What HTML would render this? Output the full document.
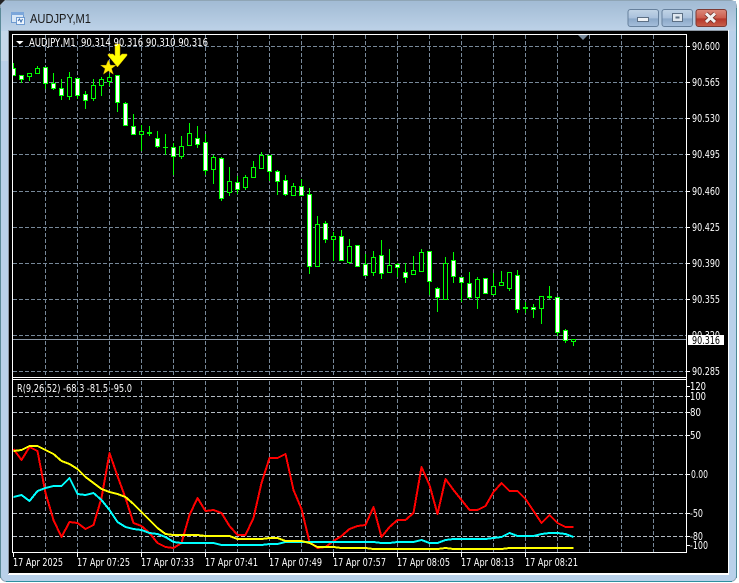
<!DOCTYPE html>
<html><head><meta charset="utf-8"><title>AUDJPY,M1</title>
<style>
html,body{margin:0;padding:0;background:#fff;width:739px;height:583px;overflow:hidden}
svg{display:block}
text{font-family:"DejaVu Sans","Liberation Sans",sans-serif;font-size:10.5px;fill:#fff}
.c{shape-rendering:crispEdges}
</style></head><body>
<svg width="739" height="583" viewBox="0 0 739 583" xmlns="http://www.w3.org/2000/svg">
<defs>
<linearGradient id="t" x1="0" y1="0" x2="0" y2="1"><stop offset="0" stop-color="#a3bcd5"/><stop offset=".05" stop-color="#a3bcd5"/><stop offset="1" stop-color="#bdd2e8"/></linearGradient>
<linearGradient id="b" x1="0" y1="0" x2="0" y2="1"><stop offset="0" stop-color="#c2d4e6"/><stop offset=".5" stop-color="#a9c1dc"/><stop offset=".55" stop-color="#8ba8c8"/><stop offset="1" stop-color="#a6bfdc"/></linearGradient>
<linearGradient id="r" x1="0" y1="0" x2="0" y2="1"><stop offset="0" stop-color="#dc8a7c"/><stop offset=".5" stop-color="#cc5d4e"/><stop offset=".55" stop-color="#b5362a"/><stop offset="1" stop-color="#c8604c"/></linearGradient>
<clipPath id="cl"><rect x="13" y="35" width="673" height="342"/></clipPath>
</defs>
<!-- window frame -->
<rect x="0.5" y="0.5" width="736" height="581" rx="6" fill="#b9d1ea" stroke="#8fa5b5"/>
<path d="M1 31V7a6 6 0 0 1 6-6H736V31z" fill="url(#t)"/>
<path d="M0 0h5L0 5z" fill="#222"/>
<rect x="1" y="31" width="7" height="30" fill="#cfdcea" opacity=".6"/>
<rect x="6" y="581" width="726" height="1" fill="#2f8f9f"/>
<rect x="736" y="8" width="1" height="570" fill="#4b8a98"/>
<rect x="0" y="8" width="1" height="570" fill="#5b8a98"/>
<rect x="8" y="30" width="721" height="545" fill="#fff"/>
<rect x="8" y="30" width="720" height="1" fill="#8d98a4"/>
<rect x="8" y="30" width="1" height="544" fill="#8d98a4"/>
<rect x="9" y="31" width="719" height="542" fill="#000"/>
<!-- titlebar icon -->
<g class="c">
<rect x="11.5" y="12.5" width="12" height="10" fill="#d7e6f6" stroke="#6f9bd0"/>
<rect x="11" y="12" width="13" height="3" fill="#7ba6da"/>
<rect x="16.5" y="17.5" width="8" height="7" fill="#eef5fd" stroke="#6f9bd0"/>
</g>
<path d="M18 21l1.5-2 1.5 3 1.5-3" fill="none" stroke="#3d6fb0"/>
<text x="30" y="23" style="font-family:'Liberation Sans',sans-serif;font-size:12.5px;fill:#1a1a1a" textLength="61" lengthAdjust="spacingAndGlyphs">AUDJPY,M1</text>
<!-- buttons -->
<g>
<rect x="628" y="9.5" width="30.5" height="17" rx="2.5" fill="url(#b)" stroke="#66809c"/>
<rect x="662" y="9.5" width="30.5" height="17" rx="2.5" fill="url(#b)" stroke="#66809c"/>
<rect x="696" y="9.5" width="30.5" height="17" rx="2.5" fill="url(#r)" stroke="#7d3a34"/>
<rect x="637.5" y="17.5" width="11" height="4" fill="#eef2f6" stroke="#5d7085" class="c"/>
<rect x="672.5" y="13.5" width="10" height="8" fill="#dfe7ef" stroke="#5d7085" class="c"/>
<rect x="675.5" y="16.5" width="4" height="2" fill="#5d7085" class="c"/>
<path d="M706 13.5l9 8.5M715 13.5l-9 8.5" stroke="#6b2a24" stroke-width="4.6"/>
<path d="M706 13.5l9 8.5M715 13.5l-9 8.5" stroke="#f2f2f2" stroke-width="3"/>
</g>
<!-- grid -->
<g class="c" fill="none" stroke="#778899" stroke-width="1" stroke-dasharray="4 2">
<path d="M45.5 35V377M77.5 35V377M109.5 35V377M141.5 35V377M173.5 35V377M205.5 35V377M237.5 35V377M269.5 35V377M301.5 35V377M333.5 35V377M365.5 35V377M397.5 35V377M429.5 35V377M461.5 35V377M493.5 35V377M525.5 35V377M557.5 35V377M589.5 35V377M621.5 35V377M653.5 35V377"/>
<path d="M13 46.5H686M13 82.5H686M13 118.5H686M13 154.5H686M13 191.5H686M13 227.5H686M13 263.5H686M13 299.5H686M13 335.5H686M13 371.5H686"/>
<path d="M45.5 381V552M77.5 381V552M109.5 381V552M141.5 381V552M173.5 381V552M205.5 381V552M237.5 381V552M269.5 381V552M301.5 381V552M333.5 381V552M365.5 381V552M397.5 381V552M429.5 381V552M461.5 381V552M493.5 381V552M525.5 381V552M557.5 381V552M589.5 381V552M621.5 381V552M653.5 381V552"/>
<path stroke="#b4bcc4" d="M13 396.5H686M13 412.5H686M13 435.5H686M13 474.5H686M13 513.5H686M13 536.5H686"/>
</g>
<!-- price line -->
<path class="c" d="M13 339.5H686" stroke="#8a98a8" stroke-width="1"/>
<!-- candles -->
<g clip-path="url(#cl)" stroke="#00ff00" stroke-width="1">
<path fill="none" d="M13.5 63V76M21.5 75V83M29.5 73V81M37.5 66V74M45.5 67V89M53.5 73V90M61.5 79V100M69.5 72V100M77.5 78V99M85.5 91V109M93.5 79V101M101.5 77V96M109.5 74V86M117.5 75V112M125.5 102V126M133.5 114V135M141.5 125V151M149.5 126V136M157.5 131V148M165.5 134V155M173.5 143V175M181.5 136V159M189.5 123V146M197.5 126V148M205.5 134V175M213.5 155V184M221.5 157V201M229.5 167V196M237.5 176V194M245.5 175V190M253.5 161V178M261.5 152V169M269.5 155V181M277.5 170V195M285.5 175V196M293.5 183V196M301.5 179V196M309.5 188V274M317.5 216V267M325.5 221V243M333.5 232V261M341.5 230V261M349.5 239V264M357.5 245V267M365.5 254V276M373.5 251V276M381.5 240V279M389.5 249V273M397.5 263V277M405.5 263V283M413.5 256V275M421.5 249V272M429.5 251V295M437.5 287V312M445.5 257V300M453.5 252V283M461.5 277V302M469.5 272V299M477.5 277V309M485.5 278V294M493.5 273V295M501.5 271V286M509.5 272V291M517.5 270V313M525.5 302V313M533.5 304V318M541.5 296V324M549.5 286V299M557.5 297V336M565.5 329V343M573.5 339V346"/>
<path fill="#000" d="M27.5 73.5h4v3h-4zM35.5 68.5h4v5h-4zM67.5 77.5h4v19h-4zM91.5 85.5h4v13h-4zM99.5 79.5h4v6h-4zM107.5 77.5h4v4h-4zM139.5 131.5h4v3h-4zM179.5 146.5h4v10h-4zM187.5 133.5h4v12h-4zM211.5 157.5h4v12h-4zM227.5 181.5h4v11h-4zM243.5 177.5h4v10h-4zM251.5 167.5h4v10h-4zM259.5 155.5h4v13h-4zM291.5 186.5h4v9h-4zM315.5 224.5h4v42h-4zM331.5 236.5h4v3h-4zM347.5 246.5h4v16h-4zM371.5 257.5h4v15h-4zM387.5 265.5h4v7h-4zM411.5 270.5h4v4h-4zM419.5 252.5h4v19h-4zM443.5 263.5h4v36h-4zM475.5 279.5h4v18h-4zM491.5 286.5h4v8h-4zM499.5 282.5h4v3h-4zM507.5 272.5h4v16h-4zM539.5 296.5h4v12h-4zM571.5 339.5h4v2h-4z"/>
<path fill="#fff" d="M11.5 68.5h4v7h-4zM19.5 75.5h4v4h-4zM43.5 67.5h4v16h-4zM51.5 83.5h4v5h-4zM59.5 88.5h4v7h-4zM75.5 78.5h4v17h-4zM83.5 94.5h4v6h-4zM115.5 75.5h4v27h-4zM123.5 103.5h4v22h-4zM131.5 126.5h4v8h-4zM155.5 138.5h4v8h-4zM171.5 147.5h4v9h-4zM195.5 138.5h4v6h-4zM203.5 142.5h4v28h-4zM219.5 158.5h4v40h-4zM235.5 182.5h4v7h-4zM267.5 155.5h4v16h-4zM275.5 171.5h4v10h-4zM283.5 180.5h4v14h-4zM299.5 186.5h4v9h-4zM307.5 194.5h4v72h-4zM323.5 223.5h4v16h-4zM339.5 236.5h4v24h-4zM355.5 245.5h4v21h-4zM363.5 264.5h4v11h-4zM379.5 255.5h4v18h-4zM395.5 264.5h4v3h-4zM403.5 272.5h4v5h-4zM427.5 251.5h4v30h-4zM435.5 288.5h4v9h-4zM451.5 260.5h4v16h-4zM459.5 277.5h4v5h-4zM467.5 283.5h4v14h-4zM483.5 278.5h4v15h-4zM515.5 275.5h4v34h-4zM531.5 307.5h4v2h-4zM555.5 297.5h4v35h-4zM563.5 330.5h4v10h-4z"/>
<path fill="none" d="M163 147.5h5"/>
<path fill="none" stroke-width="2" d="M147 133h5M523 308h5M547 297h5"/>
</g>
<!-- star & arrow -->
<path d="M108.300 60l2.100 5.200h5.600l-4.500 3.400 1.800 5.600-5-3.400-4.900 3.400 1.700-5.600-4.500-3.400h5.600z" fill="#ffee00" stroke="#c9a800" stroke-width=".4"/>
<path d="M115 44h5v12l2-2h5v1.500L117.500 67 108 55.500V54h5l2 2z" fill="#ffff00" stroke="#d0a000" stroke-width=".5"/>
<!-- borders -->
<g class="c" fill="#fff">
<rect x="12" y="34" width="675" height="1"/>
<rect x="12" y="34" width="1" height="345"/>
<rect x="686" y="34" width="1" height="518"/>
<rect x="12" y="377" width="675" height="1"/>
<rect x="12" y="379" width="675" height="1"/>
<rect x="12" y="379" width="1" height="174"/>
<rect x="12" y="552" width="675" height="1"/>
<path d="M687 46h3v1h-3zM687 82h3v1h-3zM687 118h3v1h-3zM687 154h3v1h-3zM687 191h3v1h-3zM687 227h3v1h-3zM687 263h3v1h-3zM687 299h3v1h-3zM687 371h3v1h-3zM687 386h3v1h-3zM687 396h3v1h-3zM687 412h3v1h-3zM687 435h3v1h-3zM687 474h3v1h-3zM687 513h3v1h-3zM687 536h3v1h-3zM687 545h3v1h-3z"/>
<path d="M13 553h1v4h-1zM77 553h1v4h-1zM141 553h1v4h-1zM205 553h1v4h-1zM269 553h1v4h-1zM333 553h1v4h-1zM397 553h1v4h-1zM461 553h1v4h-1zM525 553h1v4h-1z"/>
</g>
<path d="M578 35h10l-5 5z" fill="#778899"/>
<path d="M16 41h7.500l-3.750 3.500z" fill="#fff"/>
<text x="29" y="46" textLength="179" lengthAdjust="spacingAndGlyphs" style="white-space:pre" xml:space="preserve">AUDJPY,M1  90.314 90.316 90.310 90.316</text>
<text x="17" y="392" textLength="115" lengthAdjust="spacingAndGlyphs">R(9,26,52) -68.3 -81.5 -95.0</text>
<!-- oscillator -->
<g class="c" fill="none" stroke-width="2" stroke-linejoin="round">
<polyline stroke="#ff0000" points="13.500,449 21.500,460 29.500,447 37.500,451 45.500,493 53.500,520 61.500,537 69.500,522 77.500,523 85.500,529 93.500,525 101.500,498 109.500,453 117.500,476 125.500,498 133.500,523 141.500,526 149.500,533 157.500,543 165.500,547 173.500,548 181.500,543 189.500,515 197.500,498 205.500,511 213.500,510 221.500,513 229.500,526 237.500,535 245.500,535 253.500,518 261.500,483 269.500,458 277.500,458 285.500,454 293.500,490 301.500,509 309.500,542 317.500,548 325.500,547 333.500,541 341.500,536 349.500,529 357.500,526 365.500,525 373.500,507 381.500,537 389.500,527 397.500,520 405.500,520 413.500,513 421.500,467 429.500,485 437.500,514 445.500,479 453.500,490 461.500,500 469.500,510 477.500,510 485.500,506 493.500,492 501.500,483 509.500,491 517.500,491 525.500,499 533.500,511 541.500,523 549.500,515 557.500,523 565.500,527 573.500,527"/>
<polyline stroke="#00ffff" points="13.500,497 21.500,495 29.500,501 37.500,491 45.500,488 53.500,486 61.500,486 69.500,478 77.500,494 85.500,495 93.500,493 101.500,500 109.500,510 117.500,522 125.500,527 133.500,529 141.500,530 149.500,533 157.500,534 165.500,537 173.500,542 181.500,543 189.500,543 197.500,543 205.500,543 213.500,543 221.500,545 229.500,545 237.500,545 245.500,545 253.500,545 261.500,545 269.500,544 277.500,544 285.500,542 293.500,542 301.500,542 309.500,542 317.500,542 325.500,542 333.500,542 341.500,542 349.500,542 357.500,542 365.500,542 373.500,542 381.500,543 389.500,543 397.500,542 405.500,542 413.500,542 421.500,540 429.500,543 437.500,543 445.500,540 453.500,539 461.500,539 469.500,539 477.500,539 485.500,539 493.500,538 501.500,537 509.500,533 517.500,536 525.500,536 533.500,536 541.500,534 549.500,533 557.500,533 565.500,534 573.500,537"/>
<polyline stroke="#ffff00" points="13.500,451 21.500,450 29.500,446 37.500,446 45.500,450 53.500,454 61.500,461 69.500,464 77.500,469 85.500,477 93.500,483 101.500,489 109.500,492 117.500,494 125.500,497 133.500,504 141.500,512 149.500,520 157.500,528 165.500,534 173.500,535 181.500,535 189.500,535 197.500,535 205.500,536 213.500,536 221.500,536 229.500,536 237.500,539 245.500,539 253.500,539 261.500,539 269.500,538 277.500,538 285.500,541 293.500,541 301.500,541 309.500,543 317.500,547 325.500,547 333.500,547 341.500,548 349.500,548 357.500,548 365.500,548 373.500,549 381.500,549 389.500,549 397.500,549 405.500,549 413.500,549 421.500,549 429.500,549 437.500,549 445.500,548 453.500,549 461.500,549 469.500,549 477.500,549 485.500,549 493.500,549 501.500,549 509.500,548 517.500,548 573.500,548"/>
</g>
<!-- axis labels -->
<g>
<text x="692" y="50" textLength="28" lengthAdjust="spacingAndGlyphs">90.600</text>
<text x="692" y="86" textLength="28" lengthAdjust="spacingAndGlyphs">90.565</text>
<text x="692" y="122" textLength="28" lengthAdjust="spacingAndGlyphs">90.530</text>
<text x="692" y="158" textLength="28" lengthAdjust="spacingAndGlyphs">90.495</text>
<text x="692" y="195" textLength="28" lengthAdjust="spacingAndGlyphs">90.460</text>
<text x="692" y="231" textLength="28" lengthAdjust="spacingAndGlyphs">90.425</text>
<text x="692" y="267" textLength="28" lengthAdjust="spacingAndGlyphs">90.390</text>
<text x="692" y="303" textLength="28" lengthAdjust="spacingAndGlyphs">90.355</text>
<text x="692" y="339" textLength="28" lengthAdjust="spacingAndGlyphs">90.320</text>
<rect x="688" y="335" width="36" height="10" fill="#fff" class="c"/>
<text x="692" y="344" textLength="28" lengthAdjust="spacingAndGlyphs" style="fill:#000">90.316</text>
<text x="692" y="375" textLength="28" lengthAdjust="spacingAndGlyphs">90.285</text>
<text x="690" y="390" textLength="16" lengthAdjust="spacingAndGlyphs">120</text>
<text x="690" y="400" textLength="16" lengthAdjust="spacingAndGlyphs">100</text>
<text x="690" y="416" textLength="11" lengthAdjust="spacingAndGlyphs">80</text>
<text x="690" y="439" textLength="11" lengthAdjust="spacingAndGlyphs">50</text>
<text x="691" y="478" textLength="17" lengthAdjust="spacingAndGlyphs">0.00</text>
<text x="690" y="517" textLength="13" lengthAdjust="spacingAndGlyphs">-50</text>
<text x="690" y="540" textLength="13" lengthAdjust="spacingAndGlyphs">-80</text>
<text x="690" y="549" textLength="18" lengthAdjust="spacingAndGlyphs">-100</text>
</g>
<g>
<text x="13" y="566" textLength="50" lengthAdjust="spacingAndGlyphs">17 Apr 2025</text>
<text x="77" y="566" textLength="53" lengthAdjust="spacingAndGlyphs">17 Apr 07:25</text>
<text x="141" y="566" textLength="53" lengthAdjust="spacingAndGlyphs">17 Apr 07:33</text>
<text x="205" y="566" textLength="53" lengthAdjust="spacingAndGlyphs">17 Apr 07:41</text>
<text x="269" y="566" textLength="53" lengthAdjust="spacingAndGlyphs">17 Apr 07:49</text>
<text x="333" y="566" textLength="53" lengthAdjust="spacingAndGlyphs">17 Apr 07:57</text>
<text x="397" y="566" textLength="53" lengthAdjust="spacingAndGlyphs">17 Apr 08:05</text>
<text x="461" y="566" textLength="53" lengthAdjust="spacingAndGlyphs">17 Apr 08:13</text>
<text x="525" y="566" textLength="53" lengthAdjust="spacingAndGlyphs">17 Apr 08:21</text>
</g>
</svg>
</body></html>
